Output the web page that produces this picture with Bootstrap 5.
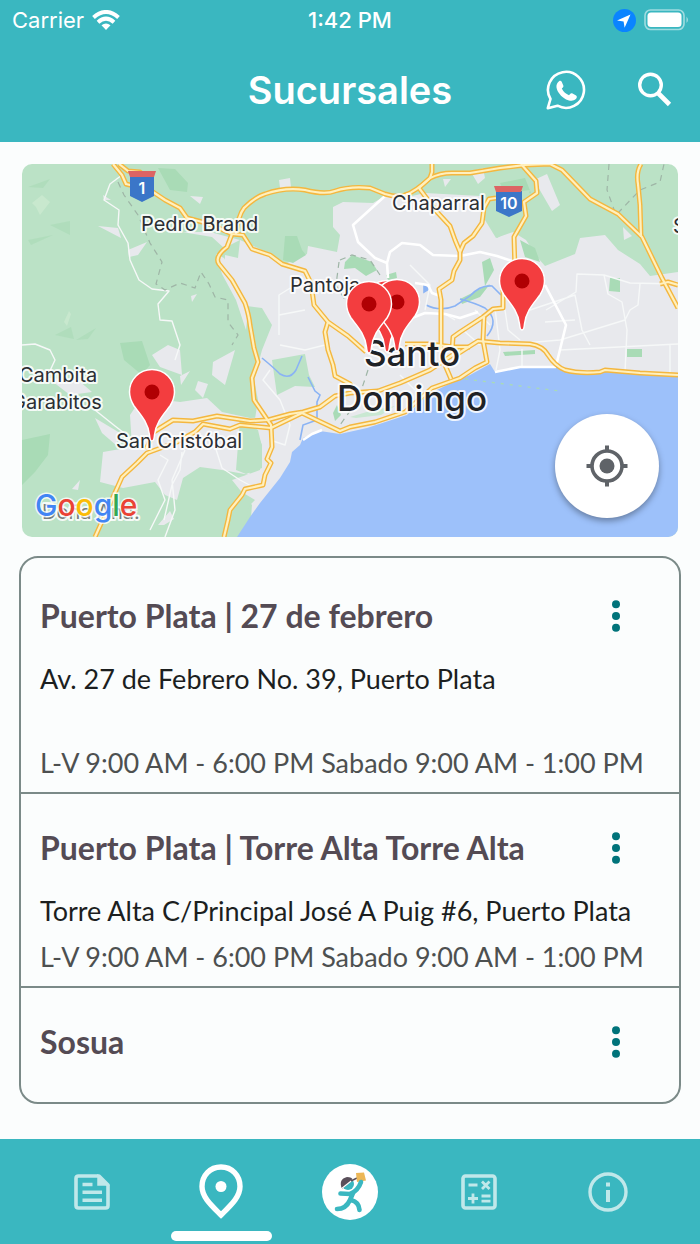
<!DOCTYPE html>
<html lang="es">
<head>
<meta charset="utf-8">
<meta name="viewport" content="width=device-width, initial-scale=1">
<title>Sucursales</title>
<link href="https://cdn.jsdelivr.net/npm/bootstrap@5.3.0/dist/css/bootstrap.min.css" rel="stylesheet">
<style>
  body { background: #fbfdfd; color: #1c1f1f; font-family: Inter, "Liberation Sans", sans-serif; }
  .bg-teal { background: #3ab7c0; }
  .app-top { height: 142px; }
  .status-row { height: 40px; font-size: 22px; line-height: 40px; padding: 0 12px; }
  .status-row > * { flex: 1 1 0; }
  .title-row { height: 100px; padding: 0 24px; }
  .title-row > * { flex: 1 1 0; }
  .app-title { font-size: 38px; line-height: 48px; font-weight: 600; }
  .title-actions { gap: 46px; }
  .icon-btn { background: none; border: 0; padding: 0; line-height: 0; }
  .map-box { margin: 22px 22px 0; border-radius: 10px; overflow: hidden; }
  .map-box > svg { display: block; width: 100%; height: auto; }
  .locate { right: 19px; bottom: 19px; width: 104px; height: 104px; box-shadow: 0 3px 6px rgba(0,0,0,.35); }
  .branches { margin: 19px 19px 35px; padding-top: 4px; border: 2px solid #7b8a88; border-radius: 19px; font-family: Lato, "Liberation Sans", sans-serif; }
  .branch { padding: 30px 19px 6px; }
  .branch + .branch { border-top: 2px solid #7b8a88; }
  .branch:last-child { padding-bottom: 36px; }
  .branch-name { font-size: 32px; line-height: 48px; font-weight: 700; color: #544b54; }
  .branch-text { font-size: 27px; line-height: 46px; margin-top: 16px; }
  .branch-hours { font-size: 27px; line-height: 46px; color: #4d5050; }
  .two-line { min-height: 84px; }
  .more { width: 48px; height: 48px; margin-right: 20px; }
  .app-nav { height: 105px; padding: 0 28px; }
  .app-nav a { flex: 1 1 0; height: 105px; color: #c0e8ea; }
  .app-nav a.active { color: #fff; }
  .app-nav a.active::after { content: ""; position: absolute; bottom: 3px; width: 101px; height: 10px; border-radius: 5px; background: #fff; }
</style>
</head>
<body>
<div class="d-flex flex-column min-vh-100">
  <header class="bg-teal text-white app-top">
    <div class="status-row d-flex align-items-center">
      <div class="d-flex align-items-center gap-2">
        <span>Carrier</span>
        <svg width="28" height="20" viewBox="0 0 28 20" fill="none" stroke="#fff" stroke-width="4"><path d="M1.500 7.500Q14-3.500 26.500 7.500M6 12.200Q14 5.200 22 12.200"/><path d="M14 20l-4.500-4.700q4.500-3.800 9 0z" fill="#fff" stroke="none"/></svg>
      </div>
      <div class="text-center fw-medium">1:42 PM</div>
      <div class="d-flex justify-content-end align-items-center gap-2">
        <svg width="23" height="23" viewBox="0 0 23 23"><circle cx="11.500" cy="11.500" r="11.500" fill="#0a84ff"/><path d="M17.500 5.500L4 11.500l6.600 1 1 6.200z" fill="#fff"/></svg>
        <svg width="44" height="22" viewBox="0 0 44 22"><rect x="1" y="1" width="39" height="19.500" rx="5.500" fill="none" stroke="#9fdce0" stroke-width="1.600"/><rect x="3.500" y="3.500" width="34" height="14.500" rx="3.500" fill="#fff"/><path d="M42.500 7.500q3 3.300 0 6.600z" fill="#9fdce0"/></svg>
      </div>
    </div>
    <div class="title-row d-flex align-items-center">
      <div></div>
      <h1 class="app-title text-center m-0">Sucursales</h1>
      <div class="title-actions d-flex justify-content-end align-items-center">
        <button class="icon-btn" aria-label="WhatsApp" type="button">
          <svg width="40" height="40" viewBox="0 0 40 40"><path d="M1.800 38.200L4.500 29A18 18 0 1 1 11.500 35.700Z" fill="none" stroke="#fff" stroke-width="2.600" stroke-linejoin="round"/><path d="M13 11.200c1-.8 2.300-.5 2.800.7l1.600 3.800c.2.800-.2 1.500-1.600 2.900 1.900 3.600 4 5.400 7.200 6.700 1.300-1.800 2-2.500 3.100-2l4 2.100c1.200.7.800 2.500-.3 3.700-2.500 2.300-5.700 2-9.700.3C15 26.700 11.300 22 10.500 17.500c-.4-2.500.7-4.900 2.500-6.300z" fill="#fff"/></svg>
        </button>
        <button class="icon-btn" aria-label="Buscar" type="button">
          <svg width="44" height="44" viewBox="0 0 44 44" fill="none" stroke="#fff"><circle cx="18.500" cy="17" r="10.800" stroke-width="3.400"/><path d="M26.500 25.500l11 11" stroke-width="4.600"/></svg>
        </button>
      </div>
    </div>
  </header>

  <main>
    <section class="map-box position-relative" aria-label="Mapa">
      <svg viewBox="22 164 656 373" font-family="Inter, sans-serif">
        <defs>
          <g id="pin"><path d="M0 49C-1.500 49-2.200 47-2.500 43-4 30-12 22-18 14-21 9-22.500 5-22.500 0a22.500 22.500 0 0 1 45 0C22.500 5 21 9 18 14 12 22 4 30 2.500 43 2.200 47 1.500 49 0 49z" fill="#f33d3f" stroke="#fff" stroke-width="1.500"/><circle r="7.500" fill="#b00003"/></g>
          <g id="roads">
            <path d="M113 164L122 175 126 184 150 190 165 200 180 208 187 218 210 224 232 234 243 235 252 249 270 255 282 264 305 271 311 283 314 305 328 322 348 336 366 352"/>
            <path d="M119 164L128 171 140 172 148 180"/>
            <path d="M232 234L227 247Q214 257 219 264L232 280 245 303Q249 315 250 325L254 348 258 362 252 378 254 400 271 425 272 447 267 459 271 463 265 475 263 485 245 489 242 495 230 510 228 520 224 537"/>
            <path d="M236 234Q238 216 244 208 255 197 265 194 285 187 305 190 325 195 335 191 350 186 370 188L385 194Q398 198 405 195 415 192 430 178 440 173 452 173L470 173 500 168 525 165 550 164 562 170 590 199 618 214 642 237 662 278 678 308"/>
            <path d="M641 164Q636 172 638 184L640 205 641 237"/>
            <path d="M521 164L536 181 537 193 524 202 526 216 514 237 515 270"/>
            <path d="M503 290V308L493 309 483 317 460 332 453 337 452 352"/>
            <path d="M432 164V172L430 178 419 188 437 212 450 226 455 240 460 252 460 260 454 271 452 280 439 289 441 300 441 350"/>
            <path d="M460 252L464 243 473 236 482 223 484 208 489 199 496 198"/>
            <path d="M456 355L478 341 500 343 530 344Q543 346 548 355 555 366 565 370 580 374 600 372L605 370 640 373 678 375"/>
            <path d="M484 317L483 340 487 362 475 368 460 378 432 388 405 412 375 422 350 427 340 431 302 413"/>
            <path d="M152 433L173 420 193 421 217 416 250 421 268 420 290 414 303 412 320 407 335 396 350 393 378 391 400 383 430 370 460 350"/>
            <path d="M95 537L113 497 122 477 137 463 147 453 177 442 195 432 203 424 230 429 240 425 271 428 302 413"/>
            <path d="M146 449L152 437"/>
            <path d="M328 322L325 332 328 350 333 365 335 376 350 384 355 392"/>
            <path d="M405 344L430 344 453 347 470 347M445 365L451 379M660 284L668 282 678 285"/>
          </g>
        </defs>
        <rect x="22" y="164" width="656" height="373" fill="#bbe2c6"/>
        <g fill="#e8e9ed">
          <path d="M333 207L343 202 373 203 385 196 412 196 425 193 480 196 485 220 496 238 513 232 526 240 538 258 545 266 575 254 580 238 605 235 618 250 640 264 650 276 678 272V380L640 400 420 440 290 490 250 530 252 505 232 480 260 470 262 445 254 425 258 400 254 380 262 350 272 325 262 308 247 306 240 290 225 268 225 255 238 258 240 240 262 250 285 264 307 254 308 246 337 252 340 235 333 227z"/>
          <path d="M130 415L142 397 180 402 207 398 222 412 250 418 268 417V440L240 435 250 475 222 470 200 467 183 478 177 500 165 495 155 482 123 488 100 482 103 452 132 447z"/>
          <path d="M182 232L210 232 240 240 224 248 212 237zM98 226L118 228 121 238zM128 250L147 242 138 255 129 257zM190 196L203 197 200 204zM216 254L224 258 240 285 248 310 246 330 236 300 222 274zM152 355L168 345 180 350 182 375 160 367zM213 362L235 350 225 385 212 375zM279 180L290 178 291 187 280 188zM534 180L547 174 560 205 552 211zM443 179h8l-6 8zM471 172l12-4 2 10-7 6zM623 227l9 9-8 4zM191 296l6-2-5 8zM180 376l10-5-9 14zM198 381l10 3-5 14-8-8zM72 489l8-9-2 10zM225 500l15-4-10 8zM158 525l12-14 4 8-10 6zM48 378l30 2 14 12-22 3zM104 200l-1-5 8 5zM95 418l25 15-4 12-14-12z"/>
        </g>
        <g fill="#a9dbb6">
          <path d="M22 440L50 434 48 455 35 472 22 485zM120 343L142 341 150 365 142 375 124 360zM158 168L175 169 188 183 187 192 170 190zM285 236L297 236 302 250 306 255 293 263 283 260zM345 262L352 255 372 262 377 270 366 276 355 268 344 269zM386 275L396 272 397 278 388 280zM482 262L490 258 494 270 485 286zM610 278h10v14l-11-1zM627 349h15v8h-15zM503 352l32-2v4l-30 2zM333 413l4-8 4 10-6 6zM500 183l25-5 6 15-25 2zM520 240l15 8 5 14-15-5zM460 299l30-15-10 13-18 7z"/>
          <path d="M28 187l22-8-7 9zM50 225l20-4v14zM28 240l25-5-22 10zM76 340l20-12-8 11zM55 335l16-8 3 12z" opacity=".6"/>
        </g>
        <path d="M32 203l10-8 8 7-10 13-4-8zM64 322l5-11 2 3-4 12z" fill="#c8e8ce"/>
        <g fill="#bbe2c6">
          <path d="M272 360L305 354 309 375 315 387 295 386 277 395zM480 196L530 190 520 225 497 238zM240 420L258 430 262 447 262 468 246 474 236 470zM222 480L255 500 250 505 240 537 222 537z"/>
          <path d="M350 417l20-6 25-5-14 9-25 3z" fill="#c9e8d2"/>
        </g>
        <path d="M237 537L250 517 260 503 280 478 290 462 292 452 300 445 303 438 320 431 340 434 367 428 407 415 427 395 453 382 470 375 490 364 495 372 520 367 556 367 570 373 605 372 678 376V537z" fill="#9dc1fa"/>
        <g fill="none" stroke="#8ab3f4" stroke-width="1.600">
          <path d="M262 358Q273 367 280 374 290 380 296 370L302 356M308 377L315 391 320 395 317 402V420L303 425 300 440M426 305Q440 312 455 306L470 296Q480 285 492 286L501 295M460 299Q475 303 485 308 500 320 487 336"/>
          <path d="M424 286l5 3-5 3z" fill="#8ab3f4"/>
        </g>
        <g fill="none" stroke="#f6f8f8" stroke-width="1.400" stroke-linejoin="round">
          <path d="M122 175L110 184 104 200 119 210 118 225 128 243 130 260 139 280 152 289 169 291 158 304 160 320 172 321 180 345 175 360M22 345L35 344 50 350 55 360 48 375M95 410L115 426 128 436M160 455L168 460 158 480 165 500 150 530M185 450L172 480 175 510 165 537M182 452L180 470 172 485 164 520M212 437L222 468 240 480 255 488M270 370L263 380 280 400 290 425 285 445 270 440M279 335V295L300 282M279 315L305 310M280 345L305 350 325 345M546 310L576 292 577 274 604 275 630 283 678 284M604 275L608 294 622 302 627 330 625 372M640 284L638 305 630 310 625 320 560 340 500 345M530 310L560 300 575 295 582 330 590 345M545 322L575 320M560 350L678 344M670 345V375M505 310L508 330 520 340M495 308L500 350 496 370M522 349V366M400 375L415 390M410 265L430 285 425 310M438 310L455 320M475 310L490 325M463 330L480 345"/>
          <path d="M385 196L353 225 358 242 375 258 387 263 388 278M387 263L390 252 402 243 420 245 433 255 460 256 480 252 497 256 515 262M545 285L566 325 556 366M415 283L428 285 432 293 440 296M412 318L425 313 445 314 460 318 478 312" stroke="#fff" stroke-width="2.600"/>
          <path d="M495 372L520 367 556 367M303 440L312 434 322 430" stroke="#fff" stroke-width="2.600"/>
        </g>
        <path d="M118 182L124 195 138 215 150 243 162 262 156 284 165 290 180 283 195 288 201 272 209 284 215 297 228 300 228 322 238 335 232 345M340 260L352 255 370 260 380 275M339 262L336 285 345 300M609 164L607 190 616 215 640 190 660 182 664 164M368 370L358 400 340 425" fill="none" stroke="#9eb5a6" stroke-width="1.200" stroke-dasharray="6 5"/>
        <path d="M465 379L560 391" stroke="#a9dbb6" stroke-width="1.300" stroke-dasharray="3 6"/>
        <g fill="none" stroke-linejoin="round">
          <use href="#roads" stroke="#f4b73f" stroke-width="5"/>
          <use href="#roads" stroke="#fff0be" stroke-width="2.200"/>
        </g>

        <g>
          <path d="M130 176h24v20l-12 6-12-6z" fill="#3b76c8"/><path d="M128 171h28l-2 6h-24z" fill="#dc6464"/>
          <path d="M496 191h26v20l-13 6-13-6z" fill="#3b76c8"/><path d="M494 186h29l-2 6h-25z" fill="#dc6464"/>
          <g fill="#fff" font-size="16" font-weight="600" text-anchor="middle"><text x="142" y="194">1</text><text x="509" y="209">10</text></g>
        </g>
        <g fill="#2b2e33" font-size="20" stroke="#fff" stroke-opacity=".85" stroke-width="4" stroke-linejoin="round" paint-order="stroke">
          <text x="141" y="231">Pedro Brand</text>
          <text x="392" y="210">Chaparral</text>
          <text x="290" y="292">Pantoja</text>
          <text x="19" y="382">Cambita</text>
          <text x="11" y="409">Garabitos</text>
          <text x="116" y="448">San Cristóbal</text>
          <text x="673" y="233">S</text>
          <text x="42" y="519" fill="#777d7c">Doña Ana.</text>
          <g font-size="35" font-weight="500" text-anchor="middle" fill="#1f2226"><text x="412" y="366">Santo</text><text x="412" y="411">Domingo</text></g>
        </g>
        <g font-size="30" font-weight="500" stroke="#fff" stroke-opacity=".8" stroke-width="3" paint-order="stroke"><text x="35" y="516"><tspan fill="#4285f4">G</tspan><tspan fill="#ea4335">o</tspan><tspan fill="#fbbc05">o</tspan><tspan fill="#4285f4">g</tspan><tspan fill="#34a853">l</tspan><tspan fill="#ea4335">e</tspan></text></g>
        <use href="#pin" x="387" y="303"/>
        <use href="#pin" x="397" y="302"/>
        <use href="#pin" x="369" y="304"/>
        <use href="#pin" x="522" y="281"/>
        <use href="#pin" x="152" y="392"/>
      </svg>
      <button type="button" class="locate icon-btn position-absolute rounded-circle bg-white" aria-label="Mi ubicación">
        <svg width="42" height="42" viewBox="0 0 42 42" fill="none" stroke="#5f6368"><circle cx="21" cy="21" r="15" stroke-width="3.600"/><circle cx="21" cy="21" r="7.500" fill="#5f6368" stroke="none"/><path d="M21 .5v6M21 35.500v6M.5 21h6M35.500 21h6" stroke-width="4"/></svg>
      </button>
    </section>

    <section class="branches" aria-label="Lista de sucursales">
      <article class="branch">
        <div class="d-flex justify-content-between"><h2 class="branch-name m-0">Puerto Plata | 27 de febrero</h2><button type="button" class="icon-btn more" aria-label="Opciones"><svg width="10" height="32" viewBox="0 0 10 32" fill="#00737a"><circle cx="5" cy="4.200" r="4"/><circle cx="5" cy="16" r="4"/><circle cx="5" cy="27.800" r="4"/></svg></button></div>
        <p class="branch-text two-line mb-0">Av. 27 de Febrero No. 39, Puerto Plata</p>
        <p class="branch-hours mb-0 text-nowrap">L-V 9:00 AM - 6:00 PM Sabado 9:00 AM - 1:00 PM</p>
      </article>
      <article class="branch">
        <div class="d-flex justify-content-between"><h2 class="branch-name m-0">Puerto Plata | Torre Alta Torre Alta</h2><button type="button" class="icon-btn more" aria-label="Opciones"><svg width="10" height="32" viewBox="0 0 10 32" fill="#00737a"><circle cx="5" cy="4.200" r="4"/><circle cx="5" cy="16" r="4"/><circle cx="5" cy="27.800" r="4"/></svg></button></div>
        <p class="branch-text mb-0 text-nowrap">Torre Alta C/Principal José A Puig #6, Puerto Plata</p>
        <p class="branch-hours mb-0 text-nowrap">L-V 9:00 AM - 6:00 PM Sabado 9:00 AM - 1:00 PM</p>
      </article>
      <article class="branch">
        <div class="d-flex justify-content-between"><h2 class="branch-name m-0">Sosua</h2><button type="button" class="icon-btn more" aria-label="Opciones"><svg width="10" height="32" viewBox="0 0 10 32" fill="#00737a"><circle cx="5" cy="4.200" r="4"/><circle cx="5" cy="16" r="4"/><circle cx="5" cy="27.800" r="4"/></svg></button></div>
      </article>
    </section>
  </main>

  <nav class="app-nav bg-teal d-flex mt-auto" aria-label="Principal">
    <a href="#noticias" class="d-flex align-items-center justify-content-center" aria-label="Noticias">
      <svg width="36" height="36" viewBox="0 0 36 36" fill="none" stroke="currentColor" stroke-width="3.600"><path d="M25 2H4.500Q2 2 2 4.500v27Q2 34 4.500 34h27q2.500 0 2.500-2.500V11z" stroke-linejoin="round"/><path d="M24 1.500V11h10z" fill="currentColor" stroke-width="1.500"/><path d="M8.500 10.500h10M8.500 18.300h19.500M8.500 26.300h19.500"/></svg>
    </a>
    <a href="#sucursales" class="active position-relative d-flex align-items-center justify-content-center" aria-label="Sucursales" aria-current="page">
      <svg width="44" height="56" viewBox="0 0 44 56"><path d="M22 3C11 3 3 11.500 3 22.500 3 33 12 41 22 51 32 41 41 33 41 22.500 41 11.500 33 3 22 3z" fill="none" stroke="currentColor" stroke-width="5.400"/><circle cx="22" cy="22.500" r="5.500" fill="currentColor"/></svg>
    </a>
    <a href="#inicio" class="d-flex align-items-center justify-content-center" aria-label="Inicio">
      <svg width="56" height="56" viewBox="0 0 56 56"><circle cx="28" cy="28" r="28" fill="#fff"/><circle cx="26" cy="20" r="6" fill="#3ab7c0"/><path d="M20 25Q16 15 25 13 30 13 31 16L20 25z" fill="#5a4f5a"/><path d="M19 25L33 14" stroke="#fff" stroke-width="1.200"/><path d="M29 17l6-3" stroke="#5a4f5a" stroke-width="1.500"/><path d="M34 9l8-.5 2 8-9 1.500z" fill="#ecb757"/><path d="M18.500 29.500L28 30Q36 27 39 18M31 29L28 36Q24 45 15 45M29 36Q37 38 37.500 46" fill="none" stroke="#3ab7c0" stroke-width="4.600" stroke-linecap="round"/></svg>
    </a>
    <a href="#calculadora" class="d-flex align-items-center justify-content-center" aria-label="Calculadora">
      <svg width="36" height="36" viewBox="0 0 36 36" fill="none" stroke="currentColor" stroke-width="2.800"><rect x="2" y="2" width="32" height="32" rx="2.500" stroke-width="3.600"/><path d="M7.500 11h9M7 24.500h10M12 19.500v10M20.500 22h9M20.500 27.200h9M21 7.500l7.500 7.500M28.500 7.500L21 15"/></svg>
    </a>
    <a href="#informacion" class="d-flex align-items-center justify-content-center" aria-label="Información">
      <svg width="40" height="40" viewBox="0 0 40 40"><circle cx="20" cy="20" r="18" fill="none" stroke="currentColor" stroke-width="3.400"/><path d="M18 10.500h4v4h-4zM18 18h4v12h-4z" fill="currentColor"/></svg>
    </a>
  </nav>
</div>
<script src="https://cdn.jsdelivr.net/npm/bootstrap@5.3.0/dist/js/bootstrap.bundle.min.js"></script>
</body>
</html>
